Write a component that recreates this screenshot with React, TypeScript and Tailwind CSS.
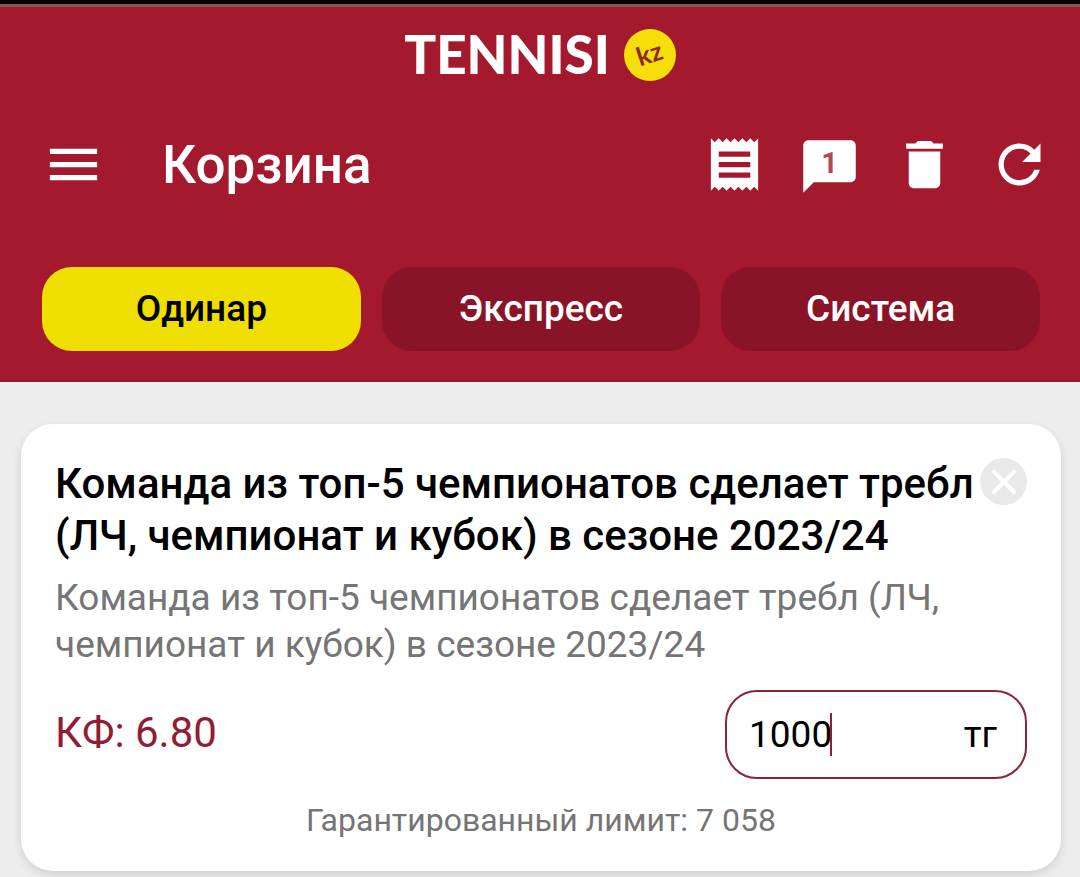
import React, { useState } from "react";
import { MdChatBubble, MdDelete, MdMenu, MdReceipt, MdRefresh } from "react-icons/md";

const tabs = ["Одинар", "Экспресс", "Система"];

interface BetProps {
  bet: {
    title: string
    description: string
    odds: string
    limit: string
  };
}

const Logo = () => {
  return (
    <div className="flex h-[52px] items-center justify-center gap-3.5">
      <span className="pb-1 font-[Lato,sans-serif] text-[53px] leading-none font-black text-white">TENNISI</span>
      <span className="flex size-[52px] items-center justify-center rounded-full bg-[#f6de0a]">
        <span className="-rotate-18 pb-1 font-[Lato,sans-serif] text-[26px] leading-none font-bold text-[#8c2a1c]">kz</span>
      </span>
    </div>
  );
};

const Toolbar = () => {
  return (
    <div className="mt-[50px] flex items-center pr-[29px] pl-[42px] text-[63px] text-white">
      <button type="button" aria-label="Меню"><MdMenu /></button>
      <h1 className="ml-[57px] text-[53px] leading-[60px] font-medium">Корзина</h1>
      <div className="ml-auto flex gap-8">
        <button type="button" aria-label="Купоны"><MdReceipt /></button>
        <button type="button" aria-label="Сообщения" className="relative pt-1">
          <MdChatBubble />
          <span className="absolute inset-x-0 top-4 text-center text-[29px] leading-8 font-bold text-[#b04a5b]">1</span>
        </button>
        <button type="button" aria-label="Удалить"><MdDelete /></button>
        <button type="button" aria-label="Обновить"><MdRefresh /></button>
      </div>
    </div>
  );
};

const Bet = ({ bet }: BetProps) => {
  const [sum, setSum] = useState("1000");

  return (
    <article className="rounded-[32px] bg-white px-[34px] pt-[34px] pb-8 shadow-[0_4px_10px_rgba(0,0,0,0.12)]">
      <div className="flex items-start gap-1">
        <h2 className="flex-1 text-[42px] leading-[52px] font-medium text-black">{bet.title}</h2>
        <button type="button" aria-label="Закрыть" className="flex size-[47px] items-center justify-center rounded-full bg-[#e9e9e9]">
          <svg viewBox="0 0 24 24" className="size-6 stroke-white" strokeWidth="4" strokeLinecap="round">
            <path d="M2 2l20 20M22 2L2 22" />
          </svg>
        </button>
      </div>
      <p className="mt-3 text-[37px] leading-[47px] text-[#757575]">{bet.description}</p>
      <div className="mt-[22px] flex items-center justify-between">
        <p className="pb-1 text-[42px] leading-[52px] text-[#8f1d33]">КФ: {bet.odds}</p>
        <label className="flex h-[89px] w-[302px] items-center rounded-[32px] border-2 border-[#8a2438] pr-7 pl-[22px] text-[37px] text-black">
          <input
            aria-label="Сумма"
            inputMode="numeric"
            className="max-w-[180px] [field-sizing:content] outline-none"
            value={sum}
            onChange={(e) => setSum(e.target.value)}
          />
          <span className="-ml-0.5 h-[43px] w-0.5 bg-[#8f1d33]" />
          <span className="ml-auto">тг</span>
        </label>
      </div>
      <p className="mt-[23px] text-center text-[32px] leading-[37px] text-[#757575]">Гарантированный лимит: {bet.limit}</p>
    </article>
  );
};

const App = () => {
  const [active, setActive] = useState("Одинар");

  return (
    <div className="min-h-screen bg-[#ededed] font-[Roboto,sans-serif]">
      <header className="border-b-2 border-[#8f1a30] bg-[#a4192d] pb-[29px]">
        <div className="h-[7px] border-b-3 border-[#7d5a5e] bg-black" />
        <div className="pt-[22px]">
          <Logo />
        </div>
        <Toolbar />
        <nav className="mt-[69px] grid grid-cols-3 gap-[21px] pr-10 pl-[42px]">
          {tabs.map((tab) => (
            <button
              key={tab}
              type="button"
              onClick={() => setActive(tab)}
              className={`h-[84px] rounded-[30px] text-[37px] font-medium ${active === tab ? "bg-[#efdf00] text-black" : "bg-[#8a1427] text-white"}`}
            >
              {tab}
            </button>
          ))}
        </nav>
      </header>
      <main className="pt-[42px] pr-[19px] pl-[21px]">
        <Bet
          bet={{
            title: "Команда из топ-5 чемпионатов сделает требл (ЛЧ, чемпионат и кубок) в сезоне 2023/24",
            description: "Команда из топ-5 чемпионатов сделает требл (ЛЧ, чемпионат и кубок) в сезоне 2023/24",
            odds: "6.80",
            limit: "7 058",
          }}
        />
      </main>
    </div>
  );
};

export default App;
